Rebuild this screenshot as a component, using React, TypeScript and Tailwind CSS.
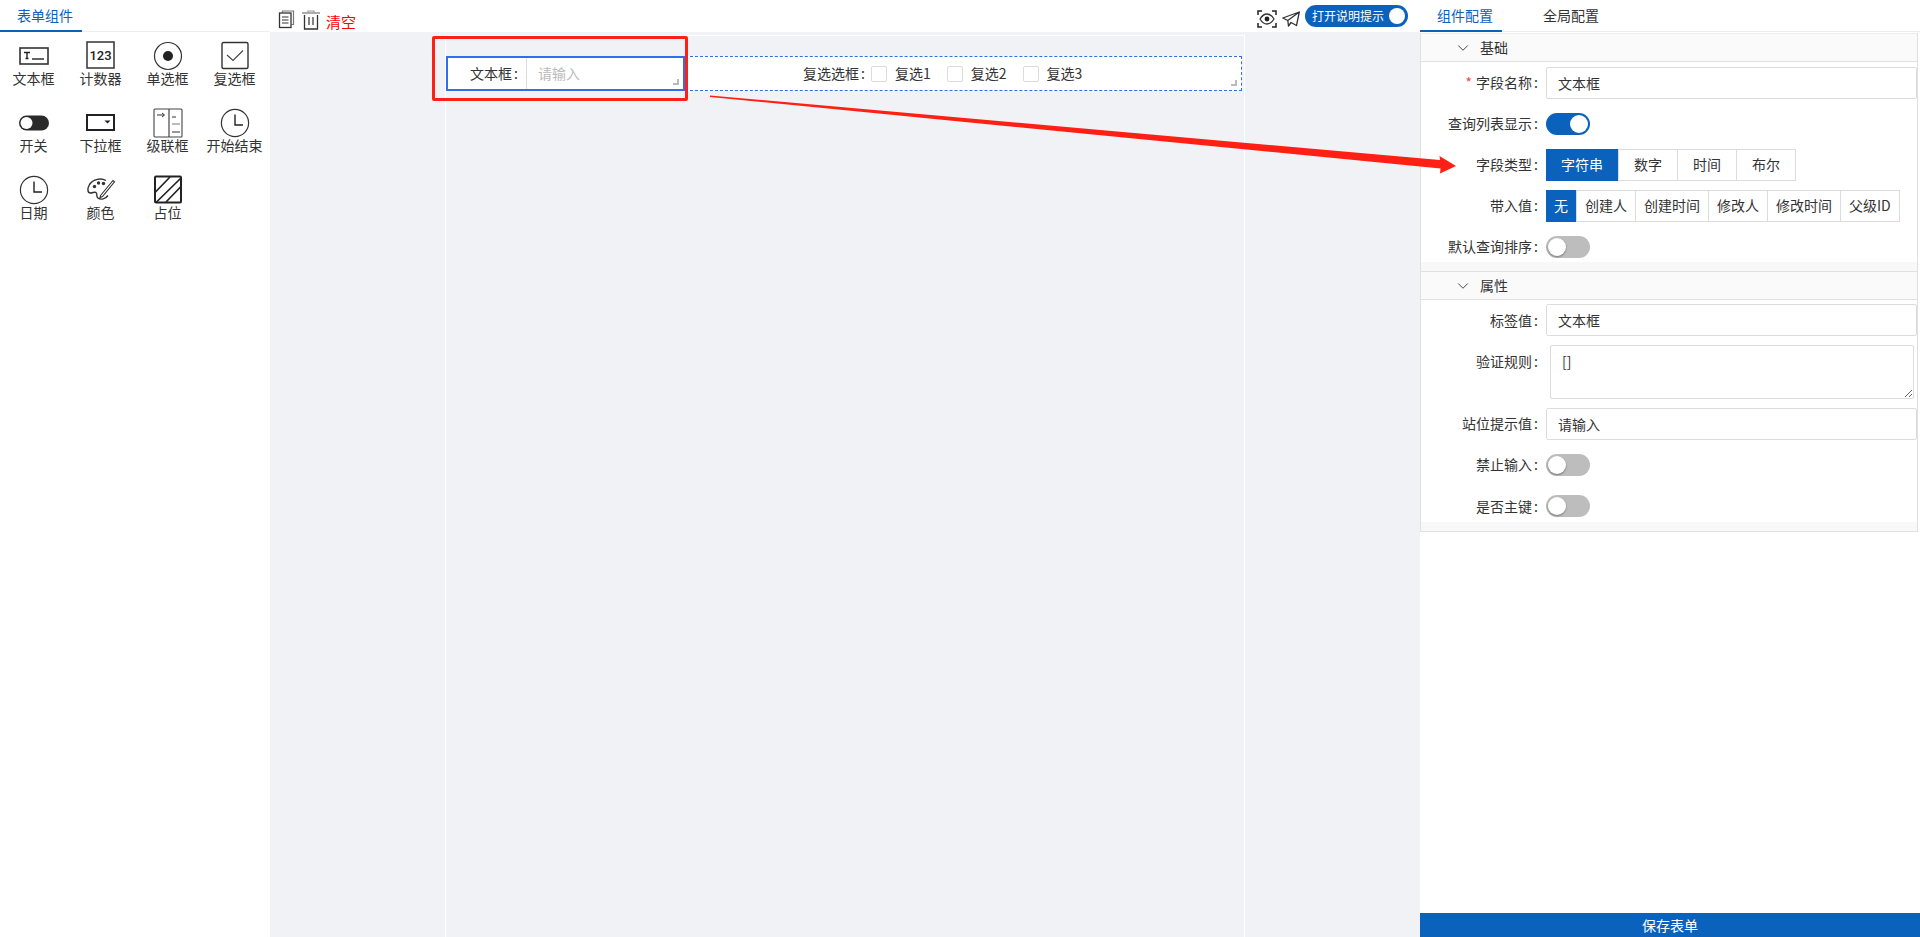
import React from 'react'
import { ChevronDown } from 'lucide-react'

const TextIcon = () => (
  <svg width="30" height="30" viewBox="0 0 30 30" fill="none">
    <rect x="1" y="7" width="28" height="16" fill="#fff" stroke="#333" strokeWidth="1.6" />
    <path d="M5 11.5h6M8 11.5v6M6.5 17.5h3" stroke="#222" strokeWidth="1.4" />
    <path d="M13 18h12" stroke="#222" strokeWidth="1.4" />
  </svg>
)

const CounterIcon = () => (
  <svg width="30" height="30" viewBox="0 0 30 30" fill="none">
    <rect x="1" y="1" width="27" height="26" stroke="#333" strokeWidth="1.5" />
    <text x="14.5" y="19" textAnchor="middle" fontSize="13" fontWeight="500" fill="#222" fontFamily="Roboto, sans-serif">
      123
    </text>
  </svg>
)

const RadioIcon = () => (
  <svg width="30" height="30" viewBox="0 0 30 30" fill="none">
    <circle cx="15" cy="15" r="13.5" stroke="#333" strokeWidth="1.2" />
    <circle cx="15" cy="15" r="5" fill="#222" />
  </svg>
)

const CheckIcon = () => (
  <svg width="30" height="30" viewBox="0 0 30 30" fill="none">
    <rect x="2" y="1.5" width="26" height="26" rx="1.5" stroke="#333" strokeWidth="1.4" />
    <path d="M7 14l6 5.5L23 9.5" stroke="#444" strokeWidth="1.1" />
  </svg>
)

const SwitchIcon = () => (
  <svg width="30" height="30" viewBox="0 0 30 30" fill="none">
    <rect x="0" y="7.5" width="30" height="15" rx="7.5" fill="#2a2a2a" />
    <circle cx="7.5" cy="15" r="6" fill="#fff" />
  </svg>
)

const SelectIcon = () => (
  <svg width="30" height="30" viewBox="0 0 30 30" fill="none">
    <rect x="1" y="7" width="27" height="15" fill="#fff" stroke="#222" strokeWidth="2" />
    <path d="M18.5 12.5h6l-3 3z" fill="#222" />
  </svg>
)

const CascadeIcon = () => (
  <svg width="30" height="30" viewBox="0 0 30 30" fill="none">
    <rect x="1" y="1" width="28" height="28" rx="1" stroke="#444" strokeWidth="1.1" />
    <path d="M16 1v28" stroke="#444" strokeWidth="1.2" />
    <path d="M4 7h7M9 5l2.5 2-2.500 2" stroke="#333" strokeWidth="1" />
    <path d="M19 9h4M19 24h8" stroke="#333" strokeWidth="1.1" />
    <path d="M19 16h8" stroke="#aaa" strokeWidth="1.6" />
  </svg>
)

const ClockIcon = () => (
  <svg width="30" height="30" viewBox="0 0 30 30" fill="none">
    <circle cx="15" cy="15" r="13.6" stroke="#333" strokeWidth="1.2" />
    <path d="M15 6.500v10.500h8" stroke="#222" strokeWidth="1.4" />
  </svg>
)

const PaletteIcon = () => (
  <svg width="30" height="30" viewBox="0 0 30 30" fill="none">
    <path
      d="M20 5.500C15 2.500 7 4 3.500 9.500 1 14 1.500 18 4.500 18c2.500 0 3.500-1.500 5.500-.5 2 1.200-.5 4 2 5.700 3 1.800 7.500.8 10-2.700"
      stroke="#333"
      strokeWidth="1.4"
    />
    <path d="M14.500 20.500L27 5.500l1.500 1.300L16.500 21.500l-2.500 1z" fill="#fff" stroke="#333" strokeWidth="1.1" />
    <circle cx="8.500" cy="11.500" r="1.700" fill="#333" />
    <circle cx="12.500" cy="8" r="1.700" fill="#333" />
    <circle cx="17.500" cy="8.500" r="1.700" fill="#333" />
  </svg>
)

const PlaceholderIcon = () => (
  <svg width="30" height="30" viewBox="0 0 30 30" fill="none">
    <rect x="2" y="1.500" width="26" height="26" rx="1" stroke="#222" strokeWidth="2" />
    <path d="M2.500 17L17 2M3 27.500L28 3M13 27L27.500 12" stroke="#222" strokeWidth="1.700" />
  </svg>
)

const widgets = [
  { name: '文本框', icon: <TextIcon /> },
  { name: '计数器', icon: <CounterIcon /> },
  { name: '单选框', icon: <RadioIcon /> },
  { name: '复选框', icon: <CheckIcon /> },
  { name: '开关', icon: <SwitchIcon /> },
  { name: '下拉框', icon: <SelectIcon /> },
  { name: '级联框', icon: <CascadeIcon /> },
  { name: '开始结束', icon: <ClockIcon /> },
  { name: '日期', icon: <ClockIcon /> },
  { name: '颜色', icon: <PaletteIcon /> },
  { name: '占位', icon: <PlaceholderIcon /> },
]

const Toggle = ({ on }: { on?: boolean }) => (
  <div
    className={`flex h-[22px] w-11 items-center rounded-full px-[2px] ${
      on ? 'justify-end bg-[#0a62bd]' : 'justify-start bg-[#bdbdbd]'
    }`}
  >
    <span className={`h-[18px] w-[18px] rounded-full bg-white ${on ? '' : 'shadow-[0_1px_2px_rgba(0,0,0,0.4)]'}`} />
  </div>
)

const Colon = () => <span className="pl-[2px]">:</span>

const Field = ({
  label,
  required,
  className,
  children,
}: {
  label: string
  required?: boolean
  className: string
  children: React.ReactNode
}) => (
  <div className={`flex items-center ${className}`}>
    <label className="w-[117px] shrink-0 text-right">
      {required && <span className="mr-1 text-[#f5483b]">*</span>}
      {label}
      <Colon />
    </label>
    <div className="ml-2 min-w-0 flex-1">{children}</div>
  </div>
)

const TextInput = ({ value }: { value: string }) => (
  <input
    readOnly
    value={value}
    className="block h-8 w-full rounded-[2px] border border-[#dcdcdc] bg-white px-[11px] text-[#333] outline-none"
  />
)

const Segments = ({ items, cellClass }: { items: string[]; cellClass: string }) => (
  <div className="flex h-8 w-fit border border-[#dcdcdc]">
    {items.map((item, i) => (
      <div
        key={item}
        className={`flex items-center ${cellClass} ${
          i === 0 ? '-my-px -ml-px bg-[#0a62bd] text-white' : 'border-l border-[#dcdcdc]'
        }`}
      >
        {item}
      </div>
    ))}
  </div>
)

const SectionHeader = ({ title, className }: { title: string; className: string }) => (
  <div className={`flex items-center border-b border-[#e0e0e0] bg-[#fafafa] pl-[33px] ${className}`}>
    <ChevronDown size={18} strokeWidth={1.3} className="text-[#444]" />
    <span className="ml-2">{title}</span>
  </div>
)

const ResizeMark = () => (
  <span className="absolute bottom-[4px] right-[4px] h-[6px] w-[6px] border-b-2 border-r-2 border-[#bbb]" />
)

export default function App() {
  return (
    <div className="relative flex h-screen w-full overflow-hidden bg-white font-['Noto_Sans_CJK_SC','Liberation_Sans',sans-serif] text-[14px] text-[#333]">
      {/* component palette */}
      <aside className="w-[270px] shrink-0">
        <div className="flex h-8 border-b border-[#eee]">
          <div className="-mb-px flex w-[82px] items-center border-b-2 border-[#0a62bd] pl-[17px] text-[#0a62bd]">
            表单组件
          </div>
        </div>
        <div className="grid w-[268px] auto-rows-[67px] grid-cols-4 pt-[9px]">
          {widgets.map(w => (
            <div key={w.name} className="flex flex-col items-center">
              <div className="h-[30px] w-[30px]">{w.icon}</div>
              <div className="whitespace-nowrap text-center leading-[14px]">{w.name}</div>
            </div>
          ))}
        </div>
      </aside>

      {/* canvas */}
      <main className="flex min-w-0 flex-1 flex-col">
        <div className="flex h-8 shrink-0 items-center pl-[8px]">
          <svg width="17" height="19" viewBox="0 0 17 19" fill="none" className="mt-[7px]">
            <path d="M4.500 2.500V1h11v13.500h-2" stroke="#777" strokeWidth="1.200" />
            <rect x="1.500" y="3" width="11.500" height="14.500" stroke="#333" strokeWidth="1.300" />
            <path d="M4 7h6.500M4 10h6.500M4 13h6.500" stroke="#333" strokeWidth="1.200" />
          </svg>
          <svg width="18" height="20" viewBox="0 0 18 20" fill="none" className="ml-[7px] mt-[7px]">
            <path d="M0 3h18" stroke="#999" strokeWidth="1.600" />
            <path d="M6 3V1h6v2" stroke="#999" strokeWidth="1.200" />
            <path d="M2.500 5v14h13V5" stroke="#333" strokeWidth="1.300" />
            <path d="M7 7v8M11 7v8" stroke="#333" strokeWidth="1.200" />
          </svg>
          <span className="ml-[6px] mt-[11px] text-[15px] leading-[20px] text-[#ff0000]">清空</span>
          <div className="ml-auto mr-[12px] flex items-center">
            <svg width="20" height="18" viewBox="0 0 20 18" fill="none" className="mt-[6px]">
              <path d="M1 5V1h4M15 1h4v4M19 13v4h-4M5 17H1v-4" stroke="#222" strokeWidth="1.500" />
              <path d="M3 9c2-3.300 4.300-5 7-5s5 1.700 7 5c-2 3.300-4.300 5-7 5s-5-1.700-7-5z" stroke="#333" strokeWidth="1.300" />
              <circle cx="10" cy="9" r="2.400" fill="#222" />
            </svg>
            <svg width="18" height="16" viewBox="0 0 18 16" fill="none" className="ml-[5px] mt-[6px]">
              <path d="M17.300 1L.800 7l5 2.500L17.300 1zM17.300 1L14.500 14.500 9 11.500l-2.500 3.500-.7-5.500" stroke="#333" strokeWidth="1.300" strokeLinejoin="round" />
            </svg>
            <div className="ml-[5px] flex h-[22px] w-[103px] items-center rounded-full bg-[#0a62bd] pl-[7px] text-[12px] text-white">
              打开说明提示
              <span className="ml-auto mr-[3px] h-4 w-4 rounded-full bg-white" />
            </div>
          </div>
        </div>
        <div className="flex min-h-0 flex-1 justify-center bg-[#f0f2f6] pt-[3px]">
          <div className="w-[800px] border-x border-t border-white pr-[2px] pt-[20px]">
            <div className="flex h-[35px]">
              <div className="relative flex w-[239px] items-center border-2 border-[#2f6fed] bg-white">
                <div className="w-[74px] shrink-0 pr-1 text-right">
                  文本框
                  <Colon />
                </div>
                <div className="ml-[4px] flex h-full flex-1 items-center border-l border-[#dcdcdc] pl-[11px] text-[#bbb]">
                  请输入
                </div>
                <ResizeMark />
              </div>
              <div className="relative flex flex-1 items-center border border-dashed border-[#2f6fed] bg-white">
                <div className="w-[185px] shrink-0 pr-[6px] text-right">
                  复选选框
                  <Colon />
                </div>
                {['复选1', '复选2', '复选3'].map(item => (
                  <div key={item} className="mr-4 flex items-center">
                    <span className="h-4 w-4 rounded-[2px] border border-[#dcdcdc]" />
                    <span className="ml-2">{item}</span>
                  </div>
                ))}
                <ResizeMark />
              </div>
            </div>
          </div>
        </div>
      </main>

      {/* property panel */}
      <aside className="relative flex w-[500px] shrink-0 flex-col">
        <div className="flex h-8 shrink-0 border-b border-[#eee]">
          <div className="-mb-px flex w-[82px] items-center border-b-2 border-[#0a62bd] pl-[17px] text-[#0a62bd]">
            组件配置
          </div>
          <div className="ml-[24px] flex items-center pl-[17px]">全局配置</div>
        </div>
        <div className="mr-[2px] mt-px border-x border-b border-[#e0e0e0]">
          <SectionHeader title="基础" className="h-[29px] border-t border-t-[#eee]" />
          <Field label="字段名称" required className="h-[41px]">
            <TextInput value="文本框" />
          </Field>
          <Field label="查询列表显示" className="h-[41px]">
            <Toggle on />
          </Field>
          <Field label="字段类型" className="h-[41px]">
            <Segments items={['字符串', '数字', '时间', '布尔']} cellClass="px-[15px]" />
          </Field>
          <Field label="带入值" className="h-[41px]">
            <Segments items={['无', '创建人', '创建时间', '修改人', '修改时间', '父级ID']} cellClass="px-2" />
          </Field>
          <Field label="默认查询排序" className="h-[36px] pt-[5px]">
            <Toggle />
          </Field>
          <div className="h-[9px] bg-[#f8f8f8]" />
          <SectionHeader title="属性" className="h-[29px] border-t border-t-[#e0e0e0]" />
          <Field label="标签值" className="h-[40px]">
            <TextInput value="文本框" />
          </Field>
          <div className="flex h-[63px] items-start pt-[5px]">
            <label className="mt-[6px] w-[117px] shrink-0 text-right">
              验证规则
              <Colon />
            </label>
            <textarea
              readOnly
              defaultValue="[]"
              className="ml-[12px] block h-[54px] w-[364px] rounded-[2px] border border-[#dcdcdc] px-[11px] py-[5px] leading-[20px] outline-none"
            />
          </div>
          <Field label="站位提示值" className="h-[41px]">
            <TextInput value="请输入" />
          </Field>
          <Field label="禁止输入" className="h-[41px]">
            <Toggle />
          </Field>
          <Field label="是否主键" className="h-[37px] pt-[5px]">
            <Toggle />
          </Field>
          <div className="h-[9px] bg-[#f8f8f8]" />
        </div>
        <button className="mt-auto flex h-6 w-full shrink-0 items-center justify-center bg-[#0a62bd] text-white">
          保存表单
        </button>
      </aside>

      {/* red callout over the canvas */}
      <div className="pointer-events-none absolute left-[432px] top-[36px] h-[65px] w-[256px] rounded-[2px] border-[3px] border-[#ff2015]" />
      <svg className="pointer-events-none absolute left-0 top-0" width="1920" height="937" fill="none">
        <path d="M710 95.500L1440 160L1439.500 156L1456 166L1440 173.500L1440.500 168.500L710 97Z" fill="#ff2015" />
      </svg>
    </div>
  )
}
